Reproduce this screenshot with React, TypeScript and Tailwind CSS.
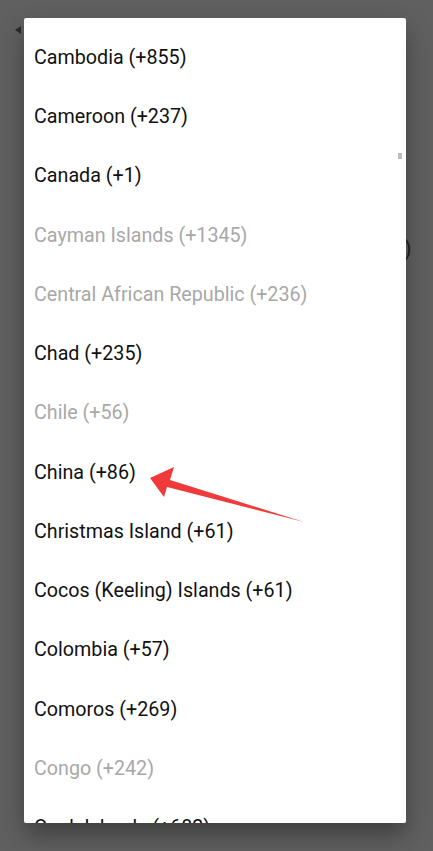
import React from "react";

const items: { name: string; off?: boolean }[] = [
  { name: "Cambodia (+855)" },
  { name: "Cameroon (+237)" },
  { name: "Canada (+1)" },
  { name: "Cayman Islands (+1345)", off: true },
  { name: "Central African Republic (+236)", off: true },
  { name: "Chad (+235)" },
  { name: "Chile (+56)", off: true },
  { name: "China (+86)" },
  { name: "Christmas Island (+61)" },
  { name: "Cocos (Keeling) Islands (+61)" },
  { name: "Colombia (+57)" },
  { name: "Comoros (+269)" },
  { name: "Congo (+242)", off: true },
  { name: "Cook Islands (+682)" },
];

export default function App() {
  return (
    <div
      className="relative w-[433px] h-[851px] overflow-hidden bg-[#606060]"
      style={{ fontFamily: "Roboto, 'Noto Sans', sans-serif" }}
    >
      {/* faint background content */}
      <div className="absolute left-[15px] top-[26px] w-0 h-0 border-y-[4px] border-y-transparent border-r-[6px] border-r-[#2a2a2a]" />
      <div className="absolute left-[404px] top-[238px] text-[22px] leading-none text-[#222]">)</div>

      <div className="pt-[18px] pl-[24px]">
        <div className="relative w-[382px] h-[805px] bg-white rounded-[2px] overflow-hidden shadow-[0_12px_24px_rgba(0,0,0,0.35)]">
          <div className="pt-[10px]">
            {items.map((it) => (
              <div
                key={it.name}
                className={`h-[59.25px] flex items-center pl-[10px] text-[19.7px] whitespace-nowrap ${
                  it.off ? "text-[#a8a8a8]" : "text-[#111111]"
                }`}
              >
                {it.name}
              </div>
            ))}
          </div>
          <div className="absolute left-[374px] top-[135px] w-[4px] h-[6px] bg-[#bdbdbd]" />
        </div>
      </div>

      <svg
        className="absolute left-0 top-0"
        width="433"
        height="851"
        viewBox="0 0 433 851"
      >
        <polygon
          points="150,478 174,467 170,480 304,522 167,487 164,497"
          fill="#f03a3a"
        />
      </svg>
    </div>
  );
}
